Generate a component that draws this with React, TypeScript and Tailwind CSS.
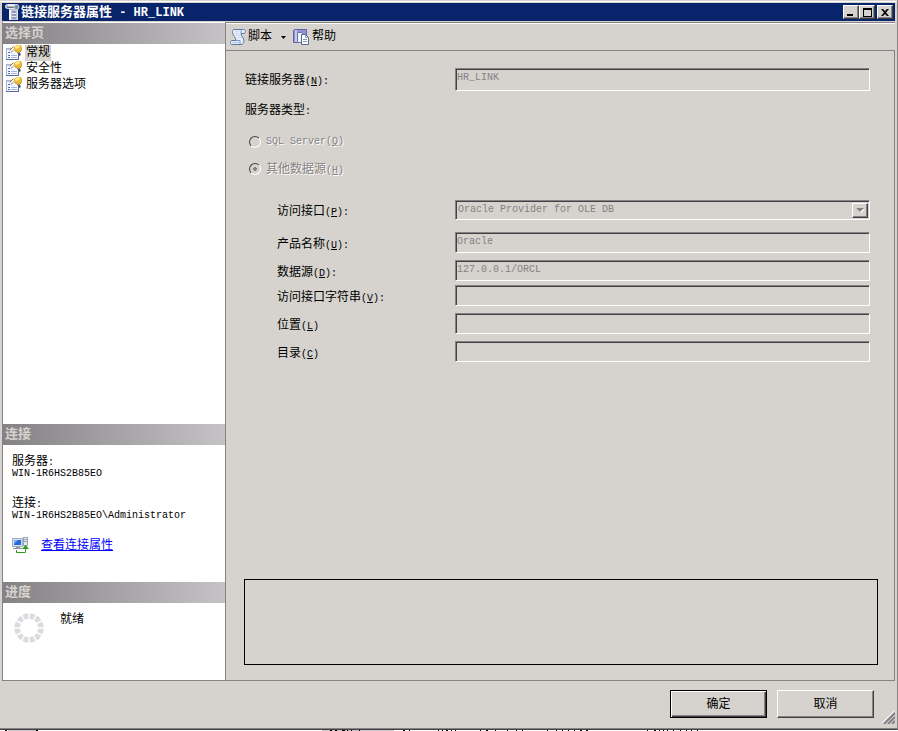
import type { ReactNode } from "react";

const raised =
  "border border-t-white border-l-white border-r-[#424142] border-b-[#424142] bg-[#d6d3ce] shadow-[inset_-1px_-1px_0_#848284]";
const raisedDefault =
  "border border-black bg-[#d6d3ce] shadow-[inset_1px_1px_0_#fff,inset_-1px_-1px_0_#424142,inset_-2px_-2px_0_#848284]";
const sunken =
  "border border-t-[#848284] border-l-[#848284] border-r-white border-b-white bg-[#d6d3ce] shadow-[inset_1px_1px_0_#424142]";

function Latin({ children }: { children: ReactNode }) {
  return <span className="text-[10px] leading-none">{children}</span>;
}

function Hotkey({ letter, colon = true }: { letter: string; colon?: boolean }) {
  return (
    <span className="text-[10px] leading-none">
      (<u>{letter}</u>){colon && ":"}
    </span>
  );
}

function ServerIcon() {
  return (
    <svg width="16" height="16" viewBox="0 0 16 16" className="shrink-0">
      <path d="M4 3h9v13H4z" fill="#b9c2d8" />
      <path d="M4 6h2v10H4z" fill="#f4f6fb" />
      <path d="M7 7h4v8H7z" fill="#8e9ab8" />
      <path d="M7 9h4v1H7zM7 12h4v1H7z" fill="#e6eaf4" />
      <path d="M12 5h1v11h-1z" fill="#dfe4f0" />
      <rect x="0.5" y="0.5" width="13" height="4" rx="2" fill="#a9b2bd" stroke="#dfe4e8" />
      <path d="M3 1.500h7" stroke="#f3f5f7" />
      <path d="M2 3.500h9" stroke="#66717e" />
      <circle cx="11.5" cy="3" r="2.5" fill="#7f8a98" stroke="#c9d0d8" />
    </svg>
  );
}

function PageIcon() {
  return (
    <svg width="16" height="16" viewBox="0 0 16 16" className="shrink-0">
      <path d="M.5 3.500h12v11H.5z" fill="#f6f8ff" stroke="#a3afd0" />
      <path d="M1 4h11v1H1z" fill="#ced8ef" />
      <path d="M0 14.500h13M12.500 8v6" stroke="#5b6d9c" />
      <path d="M2 7h2v1H2zM2 10h2v1H2zM2 12h2v1H2z" fill="#4a72d0" />
      <path d="M5 10h6v1H5zM5 12h6v1H5z" fill="#a7b7dd" />
      <path d="M3 6l4-4 2-1 2 4-2 2-2-1-2 2z" fill="#f5f1e6" />
      <path d="M3.500 5.500l4-4M5 7.500l2-2" fill="none" stroke="#7b7767" />
      <path d="M8 2l3-2h4l1 2v3l-3 3-2-1-3-3z" fill="#ecb935" />
      <path d="M9 2l3-1.500h2L13 3l-3 1z" fill="#fff18e" />
      <path d="M8 4.500l3 3 2 .5 2.500-2.500" fill="none" stroke="#a58033" />
      <path d="M12 8h2l1 2-2 1z" fill="#4a5468" />
    </svg>
  );
}

function ScriptIcon() {
  return (
    <svg width="16" height="16" viewBox="0 0 16 16" className="shrink-0">
      <path
        d="M3.500 .5h10c3 0 2.500 4 0 4H11c0 3 3 4 3 7.500 0 2-1 3.500-3 3.500H2c-2.500 0-2-4 0-4h4C6 8 3 7 2.500 3.500 2.300 2 2.500 1 3.500 .5z"
        fill="#e4edfb"
        stroke="#5f779f"
      />
      <path d="M11 4.500V2.500c0-1 1-2 2-2M6 11.500h4v3.500" fill="none" stroke="#7e98c2" />
      <path d="M5 2.500h4M5 4.500h4M6 6.500h4M8 8.500h4" stroke="#cbdaf0" />
      <path d="M2 13.500h7" stroke="#b0c6e7" />
    </svg>
  );
}

function HelpIcon() {
  return (
    <svg width="16" height="16" viewBox="0 0 16 16" className="shrink-0">
      <path d="M.5 1.500l1-1h12v13H.5z" fill="#9391ce" stroke="#6563a8" />
      <path d="M2 1h2v12H2z" fill="#c9c8ea" />
      <path d="M4.500 3.500h4l3 3v7h-7z" fill="#edf2fb" stroke="#65779f" />
      <path d="M8.500 5.500h4l3 3v7h-7z" fill="#fff" stroke="#566a94" />
      <path d="M12.500 5.500v3h3M10 10.500h4M10 12.500h4" fill="none" stroke="#8797b9" />
    </svg>
  );
}

function ConnectionIcon() {
  return (
    <svg width="17" height="17" viewBox="0 0 17 17" className="shrink-0">
      <rect x="0.5" y="1.5" width="10" height="8" fill="#d6dff0" stroke="#a3adc2" />
      <rect x="2" y="3" width="7" height="5" fill="#246be0" />
      <path d="M2 3h4l-4 4z" fill="#73aff9" />
      <path d="M4 10h4v1h2v1H1v-1h3z" fill="#8794b0" />
      <rect x="11.5" y="0.5" width="4" height="8" fill="#e5e8ef" stroke="#a0a7b4" />
      <path d="M12 2.500h3M12 4.500h3" stroke="#9ba5b8" />
      <path d="M4.500 13v2.500h9V12" fill="none" stroke="#2f9a1c" />
      <path d="M10 12l3.500-4 3.500 4z" fill="#2f9a1c" />
    </svg>
  );
}

function Spinner() {
  return (
    <svg width="30" height="30" viewBox="0 0 30 30" className="shrink-0">
      {Array.from({ length: 12 }, (_, i) => (
        <path key={i} d="M12 0.700l3-.5 3 .5-1.300 5.300h-3.400z" fill="#dedbe0" transform={`rotate(${i * 30 + 15} 15 15)`} />
      ))}
    </svg>
  );
}

function PanelHeader({ children }: { children: ReactNode }) {
  return (
    <h2 className="h-[21px] shrink-0 bg-linear-to-r from-[#848284] to-[#c6c3c6] pl-[2px] text-[13px] leading-[21px] font-bold text-[#d6d3ce]">
      {children}
    </h2>
  );
}

const pages = ["常规", "安全性", "服务器选项"];

function Sidebar() {
  return (
    <aside className="flex w-[224px] shrink-0 flex-col border-x border-[#848284] bg-white pt-px">
      <PanelHeader>选择页</PanelHeader>
      <ul className="flex-1 pt-px">
        {pages.map((page, i) => (
          <li key={page}>
            <button className="flex h-4 items-center gap-[3px] pl-[3px] text-left">
              <PageIcon />
              <span className={i === 0 ? "bg-[#d6d3ce] px-px leading-4" : "px-px leading-4"}>{page}</span>
            </button>
          </li>
        ))}
      </ul>

      <PanelHeader>连接</PanelHeader>
      <div className="flex h-[137px] shrink-0 flex-col pt-[10px] pl-[9px]">
        <dl className="flex flex-col gap-[18px]">
          <div>
            <dt className="leading-[14px]">服务器<Latin>:</Latin></dt>
            <dd className="text-[10px] leading-[10px]">WIN-1R6HS2B85EO</dd>
          </div>
          <div>
            <dt className="leading-[14px]">连接<Latin>:</Latin></dt>
            <dd className="text-[10px] leading-[10px]">WIN-1R6HS2B85EO\Administrator</dd>
          </div>
        </dl>
        <div className="mt-4 flex items-center gap-3">
          <ConnectionIcon />
          <a href="#connection" className="text-[#0000ff] underline">查看连接属性</a>
        </div>
      </div>

      <PanelHeader>进度</PanelHeader>
      <div className="flex h-[77px] shrink-0 gap-4 pt-[9px] pl-[11px]">
        <div className="pt-px">
          <Spinner />
        </div>
        <span role="status" className="leading-4">就绪</span>
      </div>
    </aside>
  );
}

function Toolbar() {
  return (
    <div className="flex h-[27px] shrink-0 items-center border-t border-white pl-1">
      <button className="flex items-center gap-[2px]">
        <ScriptIcon />
        脚本
        <svg width="5" height="3" viewBox="0 0 5 3" className="ml-[7px]">
          <path d="M0 0h5L2.500 3z" fill="#000" />
        </svg>
      </button>
      <button className="ml-[7px] flex items-center gap-[3px]">
        <HelpIcon />
        帮助
      </button>
    </div>
  );
}

type FieldProps = {
  id: string;
  label: string;
  letter: string;
  colon?: boolean;
  value?: string;
  row: string;
};

const fields: FieldProps[] = [
  { id: "product", label: "产品名称", letter: "U", value: "Oracle", row: "mt-3" },
  { id: "source", label: "数据源", letter: "D", value: "127.0.0.1/ORCL", row: "mt-[7px]" },
  { id: "provider-string", label: "访问接口字符串", letter: "V", row: "mt-1" },
  { id: "location", label: "位置", letter: "L", colon: false, row: "mt-[7px]" },
  { id: "catalog", label: "目录", letter: "C", colon: false, row: "mt-[7px]" },
];

function Field({ id, label, letter, colon, value = "", row }: FieldProps) {
  return (
    <div className={`flex items-center pl-8 ${row}`}>
      <label htmlFor={id} className="w-[178px] shrink-0 pt-1">
        {label}
        <Hotkey letter={letter} colon={colon} />
      </label>
      <input
        id={id}
        disabled
        defaultValue={value}
        className={`h-[21px] min-w-0 flex-1 pb-[3px] pl-px text-[10px] text-[#848284] ${sunken}`}
      />
    </div>
  );
}

const radioClass =
  "size-3 appearance-none rounded-full border border-t-[#424142] border-l-[#424142] border-r-white border-b-white bg-[#d6d3ce] checked:bg-[radial-gradient(circle,#848284_2px,transparent_2px)]";
const disabledText = "text-[#848284] [text-shadow:1px_1px_0_#fff]";

function GeneralForm() {
  return (
    <form className="flex flex-1 flex-col border-t border-r border-[#848284] pt-[17px] pr-6 pl-[19px]">
      <div className="flex items-center">
        <label htmlFor="server" className="w-[210px] shrink-0 pt-[3px]">
          链接服务器
          <Hotkey letter="N" />
        </label>
        <input
          id="server"
          disabled
          defaultValue="HR_LINK"
          className={`h-[23px] min-w-0 flex-1 pb-1 pl-px text-[10px] text-[#848284] ${sunken}`}
        />
      </div>

      <fieldset className="mt-3">
        <legend className="leading-4">服务器类型<Latin>:</Latin></legend>
        <div className="mt-[15px] flex h-4 items-center gap-[5px] pl-1">
          <input type="radio" id="sql-server" name="server-type" disabled className={radioClass} />
          <label htmlFor="sql-server" className={`text-[10px] ${disabledText}`}>
            SQL Server
            <Hotkey letter="Q" colon={false} />
          </label>
        </div>
        <div className="mt-[11px] flex h-4 items-center gap-[5px] pl-1">
          <input type="radio" id="other-source" name="server-type" disabled defaultChecked className={radioClass} />
          <label htmlFor="other-source" className={`pt-[2px] ${disabledText}`}>
            其他数据源
            <Hotkey letter="H" colon={false} />
          </label>
        </div>
      </fieldset>

      <div className="mt-[23px] flex h-5 items-center pl-8">
        <label htmlFor="provider" className="w-[178px] shrink-0 pt-1">
          访问接口
          <Hotkey letter="P" />
        </label>
        <div className={`relative flex h-5 min-w-0 flex-1 ${sunken}`}>
          <select
            id="provider"
            disabled
            className="w-full appearance-none pl-[2px] text-[10px] text-[#848284] opacity-100"
          >
            <option>Oracle Provider for OLE DB</option>
          </select>
          <span className={`pointer-events-none absolute top-[2px] right-[1px] flex h-[15px] w-4 items-center justify-center ${raised}`}>
            <svg width="9" height="5" viewBox="0 0 9 5">
              <path d="M1 1h8L5 5z" fill="#fff" />
              <path d="M0 0h8L4 4z" fill="#848284" />
            </svg>
          </span>
        </div>
      </div>

      {fields.map((field) => (
        <Field key={field.id} {...field} />
      ))}

      <div className="mt-auto -mr-2 mb-[15px] -ml-px h-[86px] border border-black" />
    </form>
  );
}

function TitleBar() {
  return (
    <header className="flex h-[18px] shrink-0 items-center bg-[#08246b] pr-[2px] pl-[3px]">
      <ServerIcon />
      <h1 className="flex-1 pt-px text-[13px] leading-[18px] font-bold whitespace-pre text-white">
        链接服务器属性<span className="text-[12px]"> - HR_LINK</span>
      </h1>
      <button aria-label="最小化" className={`flex h-[14px] w-4 items-end pb-[2px] pl-[3px] ${raised}`}>
        <svg width="6" height="2" viewBox="0 0 6 2">
          <path d="M0 0h6v2H0z" />
        </svg>
      </button>
      <button aria-label="最大化" className={`flex h-[14px] w-4 items-center justify-center ${raised}`}>
        <svg width="9" height="9" viewBox="0 0 9 9" shapeRendering="crispEdges">
          <path d="M0 0h9v9H0zM1 2v6h7V2z" fillRule="evenodd" />
        </svg>
      </button>
      <button aria-label="关闭" className={`ml-[2px] flex h-[14px] w-4 items-center justify-center ${raised}`}>
        <svg width="8" height="7" viewBox="0 0 8 7">
          <path d="M0 0h2l2 2 2-2h2L5 3.500 8 7H6L4 5 2 7H0l3-3.500z" />
        </svg>
      </button>
    </header>
  );
}

// Sliver of the window behind the dialog
function BackgroundWindow() {
  return (
    <svg width="100%" height="1" className="block bg-white" aria-hidden="true" shapeRendering="crispEdges">
      <path d="M8 .5h30M322 .5h72" stroke="#c9c4c8" />
      <path
        d="M5 .5h2M36 .5h2M330 .5h2M335 .5h2M342 .5h3M347 .5h1M351 .5h1M359 .5h1M403 .5h2M409 .5h1M438 .5h1M442 .5h1M446 .5h2M451 .5h1M455 .5h1M480 .5h1M486 .5h2M495 .5h1M507 .5h1M516 .5h1M522 .5h1M547 .5h1M556 .5h1M562 .5h1M568 .5h1M574 .5h1M580 .5h2M586 .5h2M647 .5h1M654 .5h2M659 .5h1M663 .5h1M667 .5h1M673 .5h1M680 .5h1M686 .5h1M691 .5h1M697 .5h1"
        stroke="#000"
      />
    </svg>
  );
}

export default function App() {
  return (
    <div className="flex min-h-screen flex-col bg-white font-['Liberation_Mono','Noto_Sans_CJK_SC',monospace] text-[12px] leading-4 text-black">
      <main className="flex flex-1 flex-col border-r border-b border-r-[#848284] border-b-[#424142] bg-[#d6d3ce] pt-px">
        <div className="flex flex-1 flex-col border-t border-b border-t-white border-b-[#848284] pt-px pr-[2px] pl-[2px]">
          <TitleBar />
          <div className="mt-px flex flex-1 border-b border-[#848284]">
            <Sidebar />
            <div className="flex min-w-0 flex-1 flex-col border-t border-[#848284]">
              <Toolbar />
              <GeneralForm />
            </div>
          </div>
          <footer className="relative flex h-[47px] shrink-0 justify-end gap-[10px] pt-[9px] pr-[21px]">
            <button className={`h-7 w-[97px] pt-[2px] ${raisedDefault}`}>确定</button>
            <button className={`h-7 w-[97px] pt-[2px] ${raised}`}>取消</button>
            <svg width="13" height="13" viewBox="0 0 13 13" className="absolute right-0 bottom-1">
              <path d="M0 12L12 0M4 12l8-8M8 12l4-4" stroke="#fff" />
              <path d="M2 13L13 2M6 13l7-7M10 13l3-3" stroke="#848284" strokeWidth="2" />
            </svg>
          </footer>
        </div>
      </main>
      <BackgroundWindow />
    </div>
  );
}
